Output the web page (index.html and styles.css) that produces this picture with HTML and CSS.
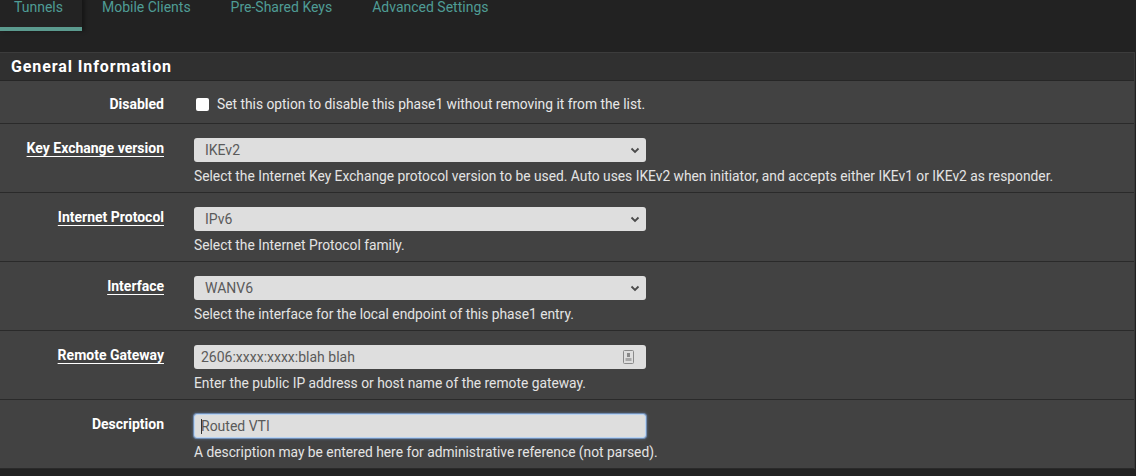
FILE: index.html
```html
<!DOCTYPE html>
<html lang="en">
<head>
<meta charset="utf-8">
<title>IPsec Phase 1</title>
<link rel="stylesheet" href="styles.css">
</head>
<body>
<nav class="tabs">
  <a class="tab active" href="#">Tunnels</a>
  <a class="tab" href="#">Mobile Clients</a>
  <a class="tab" href="#">Pre-Shared Keys</a>
  <a class="tab" href="#">Advanced Settings</a>
</nav>

<section class="panel">
  <h2 class="panel-title">General Information</h2>

  <div class="row row-check">
    <label class="label">Disabled</label>
    <div class="control check-line">
      <span class="checkbox"></span>
      <span class="check-text">Set this option to disable this phase1 without removing it from the list.</span>
    </div>
  </div>

  <div class="row">
    <label class="label"><span class="req">Key Exchange version</span></label>
    <div class="control">
      <div class="select">
        <span class="select-value">IKEv2</span>
        <svg class="chevron" width="10" height="7" viewBox="0 0 10 7"><path d="M1.5 1.5 L5 5 L8.5 1.5" fill="none" stroke="#4a4a4a" stroke-width="1.8"/></svg>
      </div>
      <p class="help">Select the Internet Key Exchange protocol version to be used. Auto uses IKEv2 when initiator, and accepts either IKEv1 or IKEv2 as responder.</p>
    </div>
  </div>

  <div class="row">
    <label class="label"><span class="req">Internet Protocol</span></label>
    <div class="control">
      <div class="select">
        <span class="select-value">IPv6</span>
        <svg class="chevron" width="10" height="7" viewBox="0 0 10 7"><path d="M1.5 1.5 L5 5 L8.5 1.5" fill="none" stroke="#4a4a4a" stroke-width="1.8"/></svg>
      </div>
      <p class="help">Select the Internet Protocol family.</p>
    </div>
  </div>

  <div class="row">
    <label class="label"><span class="req">Interface</span></label>
    <div class="control">
      <div class="select">
        <span class="select-value">WANV6</span>
        <svg class="chevron" width="10" height="7" viewBox="0 0 10 7"><path d="M1.5 1.5 L5 5 L8.5 1.5" fill="none" stroke="#4a4a4a" stroke-width="1.8"/></svg>
      </div>
      <p class="help">Select the interface for the local endpoint of this phase1 entry.</p>
    </div>
  </div>

  <div class="row">
    <label class="label"><span class="req">Remote Gateway</span></label>
    <div class="control">
      <div class="field">
        <span class="field-value">2606:xxxx:xxxx:blah blah</span>
        <svg class="autofill" width="11" height="14" viewBox="0 0 11 14">
          <rect x="0.5" y="0.5" width="10" height="13" rx="1" fill="none" stroke="#8a8a8a"/>
          <rect x="4" y="3" width="3" height="4" fill="#8a8a8a"/>
          <rect x="2.5" y="8" width="6" height="3" fill="#a8a8a8"/>
        </svg>
      </div>
      <p class="help">Enter the public IP address or host name of the remote gateway.</p>
    </div>
  </div>

  <div class="row">
    <label class="label">Description</label>
    <div class="control">
      <div class="field focused">
        <span class="caret"></span>
        <span class="field-value">Routed VTI</span>
      </div>
      <p class="help">A description may be entered here for administrative reference (not parsed).</p>
    </div>
  </div>
</section>
</body>
</html>
```

FILE: styles.css
```css
* { box-sizing: border-box; }

html, body {
  margin: 0;
  background: #222222;
  font-family: Roboto, "Liberation Sans", Arial, sans-serif;
  font-size: 14px;
  color: #e4e4e4;
}

/* top tab strip */
.tabs {
  display: flex;
  height: 31px;
  margin-top: -3px;
}

.tab {
  display: block;
  padding: 0 20px;
  line-height: 20px;
  height: 34px;
  color: #4f9c95;
  text-decoration: none;
  border-bottom: 4px solid transparent;
}

.tab.active {
  padding-left: 14px;
  padding-right: 19px;
  background: #232323;
  border-bottom-color: #5b9a8e;
  box-shadow: 3px 0 4px rgba(0, 0, 0, 0.35);
}

/* settings panel */
.panel {
  margin-top: 24px;
  width: 1135px;
  border-top: 1px solid #3c3c3c;
  border-right: 1px solid #3a3a3a;
}

.panel-title {
  margin: 0;
  height: 28px;
  padding-left: 11px;
  background: #303030;
  border-bottom: 1px solid #262626;
  font-size: 16px;
  font-weight: 700;
  letter-spacing: 0.9px;
  line-height: 28px;
  color: #ffffff;
}

.row {
  display: grid;
  grid-template-columns: 164px 1fr;
  column-gap: 30px;
  padding: 14px 0 6px;
  background: #424242;
  border-bottom: 1px solid #2a2a2a;
}

.row-check {
  padding: 13px 0 9px;
}

.label {
  text-align: right;
  font-weight: 700;
  color: #ffffff;
  line-height: 20px;
}

.req {
  text-decoration: underline;
  text-decoration-thickness: 1px;
  text-underline-offset: 3px;
}

.control {
  min-width: 0;
}

.check-line {
  display: flex;
  align-items: center;
  height: 20px;
}

.checkbox {
  width: 13px;
  height: 13px;
  margin-left: 2px;
  margin-right: 8px;
  background: #ffffff;
  border-radius: 2px;
}

.check-text {
  color: #e8e8e8;
  line-height: 20px;
  font-size: 13.8px;
}

/* dropdowns and text fields */
.select,
.field {
  position: relative;
  display: flex;
  align-items: center;
  width: 452px;
  height: 24px;
  background: #dedede;
  border-radius: 3px;
  color: #5a5a5a;
}

.select {
  padding-left: 11px;
}

.field {
  padding-left: 7px;
}

.chevron {
  position: absolute;
  right: 6px;
  top: 9px;
}

.autofill {
  position: absolute;
  right: 12px;
  top: 5px;
}

.field.focused {
  border: 1px solid #b9d3f2;
  box-shadow: 0 0 0 1px rgba(140, 180, 235, 0.55), 0 0 3px 1px rgba(120, 165, 230, 0.45);
  padding-left: 6px;
}

.caret {
  position: absolute;
  left: 6px;
  top: 4px;
  width: 1px;
  height: 15px;
  background: #333333;
}

.help {
  margin: 4px 0 0;
  line-height: 20px;
  font-size: 13.8px;
  color: #e4e4e4;
  white-space: nowrap;
}
```
